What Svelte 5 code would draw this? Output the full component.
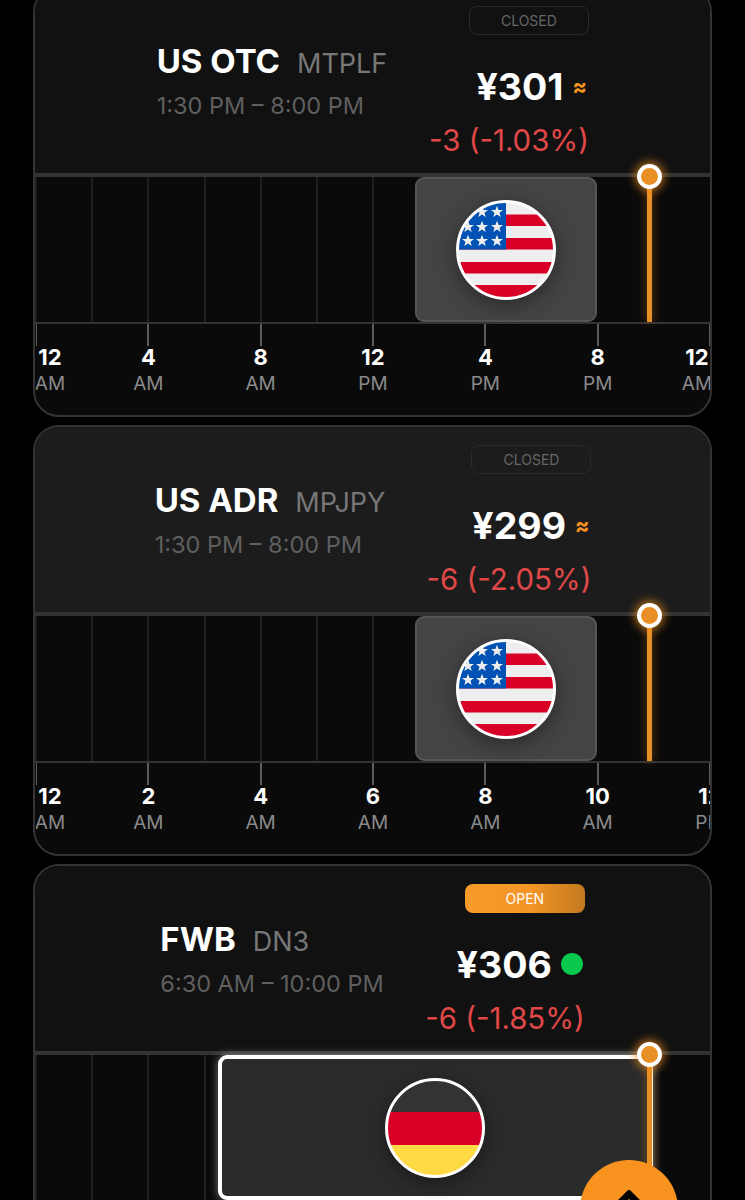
<script>
	const dayTicks = [
		['12', 'AM'],
		['4', 'AM'],
		['8', 'AM'],
		['12', 'PM'],
		['4', 'PM'],
		['8', 'PM'],
		['12', 'AM']
	];
	const halfTicks = [
		['12', 'AM'],
		['2', 'AM'],
		['4', 'AM'],
		['6', 'AM'],
		['8', 'AM'],
		['10', 'AM'],
		['12', 'PM']
	];

	const cards = [
		{
			name: 'US OTC',
			code: 'MTPLF',
			hours: '1:30 PM – 8:00 PM',
			price: '¥301',
			change: '-3 (-1.03%)',
			open: false,
			flag: 'us',
			start: 56.25,
			end: 83.33,
			now: 91,
			ticks: dayTicks,
			lastInside: true
		},
		{
			name: 'US ADR',
			code: 'MPJPY',
			hours: '1:30 PM – 8:00 PM',
			price: '¥299',
			change: '-6 (-2.05%)',
			open: false,
			flag: 'us',
			start: 56.25,
			end: 83.33,
			now: 91,
			ticks: halfTicks,
			lastInside: false,
			light: true
		},
		{
			name: 'FWB',
			code: 'DN3',
			hours: '6:30 AM – 10:00 PM',
			price: '¥306',
			change: '-6 (-1.85%)',
			open: true,
			flag: 'de',
			start: 27.08,
			end: 91.5,
			now: 91,
			ticks: dayTicks,
			lastInside: true
		}
	];

	const gridLines = [0, 1, 2, 3, 4, 5, 6];
	const star = '0,-6.2 1.6,-2 6,-1.9 2.5,0.8 3.7,5 0,2.6 -3.7,5 -2.5,0.8 -6,-1.9 -1.6,-2';
	const stars = [
		[26, 12], [41, 12],
		[12, 27], [26, 27], [41, 27],
		[12, 41], [26, 41], [41, 41]
	];
</script>

<div class="page">
	{#each cards as card}
		<section class="card" class:light={card.light}>
			<header class="head">
				<div class="title">
					<div class="title-row">
						<span class="name">{card.name}</span>
						<span class="code">{card.code}</span>
					</div>
					<div class="hours">{card.hours}</div>
				</div>
				<div class="quote" class:shifted={card.open}>
					<div class="pill" class:open={card.open}>{card.open ? 'OPEN' : 'CLOSED'}</div>
					<div class="price-row">
						<span class="price">{card.price}</span>
						{#if card.open}
							<span class="dot"></span>
						{:else}
							<span class="approx">≈</span>
						{/if}
					</div>
					<div class="change">{card.change}</div>
				</div>
			</header>

			<div class="chart">
				{#each gridLines as line}
					<span class="grid-line"></span>
				{/each}
				<div
					class="session"
					class:active={card.open}
					style="left: {card.start}%; width: {card.end - card.start}%"
				>
					<svg class="flag" viewBox="0 0 100 100">
						<defs>
							<clipPath id="round-{card.name.replace(' ', '')}">
								<circle cx="50" cy="50" r="48" />
							</clipPath>
						</defs>
						<g clip-path="url(#round-{card.name.replace(' ', '')})">
							{#if card.flag === 'us'}
								<rect width="100" height="100" fill="#eeeeee" />
								<rect y="14.5" width="100" height="11.5" fill="#d80027" />
								<rect y="38" width="100" height="11.5" fill="#d80027" />
								<rect y="62" width="100" height="11.5" fill="#d80027" />
								<rect y="85" width="100" height="15" fill="#d80027" />
								<rect width="50" height="49.5" fill="#0052b4" />
								{#each stars as [x, y]}
									<polygon points={star} fill="#eeeeee" transform="translate({x} {y})" />
								{/each}
							{:else}
								<rect width="100" height="34" fill="#333333" />
								<rect y="34" width="100" height="33" fill="#d80027" />
								<rect y="67" width="100" height="33" fill="#ffda44" />
							{/if}
						</g>
						<circle cx="50" cy="50" r="48.5" fill="none" stroke="#fff" stroke-width="3" />
					</svg>
				</div>
				<div class="now" style="left: {card.now}%">
					<span class="now-dot"></span>
				</div>
			</div>

			<div class="axis">
				{#each card.ticks as tick, i}
					<div class="tick" style="left: {(i * 100) / 6}%">
						<span class="tick-line"></span>
						<span
							class="tick-label"
							class:first={i === 0}
							class:last={i === 6 && card.lastInside}
						>
							<b>{tick[0]}</b>
							<small>{tick[1]}</small>
						</span>
					</div>
				{/each}
			</div>
		</section>
	{/each}

	<button class="fab" aria-label="Scroll to top">
		<svg viewBox="0 0 26 16" width="26" height="16">
			<path d="M2 15 13 4l11 11" fill="none" stroke="#000" stroke-width="7" />
		</svg>
	</button>
</div>

<style>
	:global(body) {
		background: #000;
		overflow: hidden;
	}

	.page {
		height: 1200px;
		overflow: hidden;
		display: flex;
		flex-direction: column;
		gap: 8px;
		padding: 0 33px;
		box-sizing: border-box;
		font-family: Inter, 'Liberation Sans', sans-serif;
		position: relative;
	}

	.card {
		flex: none;
		height: 431px;
		border: 2px solid #333;
		border-radius: 26px;
		background: #0a0a0a;
		overflow: hidden;
		display: flex;
		flex-direction: column;
		box-sizing: border-box;
	}

	.card:first-child {
		margin-top: -14px;
	}

	.head {
		flex: none;
		height: 185px;
		border-bottom: 4px solid #333;
		background: #111;
		display: grid;
		grid-template-columns: 258px 216px;
		padding-left: 108px;
		box-sizing: content-box;
	}

	.light .head {
		background: #1c1c1c;
	}

	.title {
		display: flex;
		flex-direction: column;
		width: max-content;
		justify-self: center;
		padding-top: 53px;
	}

	.light .title {
		transform: translateX(-2px);
	}

	.title-row {
		display: flex;
		align-items: baseline;
		gap: 17px;
		white-space: nowrap;
	}

	.name {
		color: #fff;
		font-size: 33px;
		font-weight: 700;
		line-height: 40px;
	}

	.code {
		color: #777;
		font-size: 27px;
		line-height: 40px;
	}

	.hours {
		color: #5f5f5f;
		font-size: 23.5px;
		line-height: 30px;
		margin-top: 7px;
		white-space: nowrap;
	}

	.quote {
		display: flex;
		flex-direction: column;
		align-items: flex-end;
		width: max-content;
		justify-self: center;
		padding-top: 18px;
	}

	.quote.shifted {
		transform: translateX(-4px);
	}

	.pill {
		width: 120px;
		height: 29px;
		box-sizing: border-box;
		border: 1px solid #2a2a2a;
		border-radius: 8px;
		background: transparent;
		color: #666;
		font-size: 14px;
		display: flex;
		align-items: center;
		justify-content: center;
	}

	.pill.open {
		border: 0;
		background: linear-gradient(90deg, #f89b2d, #f39426 55%, #c27a1f);
		color: #fff;
	}

	.price-row {
		display: flex;
		align-items: center;
		gap: 9px;
		margin-top: 29px;
		margin-right: 2px;
		height: 44px;
	}

	.price {
		color: #fff;
		font-size: 37.5px;
		font-weight: 700;
	}

	.approx {
		color: #f7931e;
		font-size: 21px;
		font-weight: 800;
		line-height: 1;
	}

	.dot {
		width: 22px;
		height: 22px;
		border-radius: 50%;
		background: #0ac84e;
	}

	.change {
		color: #e04848;
		font-size: 29.4px;
		line-height: 34px;
		margin-top: 16px;
		white-space: nowrap;
	}

	.chart {
		flex: none;
		height: 145px;
		position: relative;
		display: flex;
		border-bottom: 2px solid #333;
	}

	.grid-line {
		flex: none;
		width: 8.333%;
		box-sizing: border-box;
		border-left: 2px solid #1f1f1f;
	}

	.session {
		position: absolute;
		top: 0;
		bottom: 0;
		box-sizing: border-box;
		background: #444;
		border: 2px solid #555;
		border-radius: 9px;
		display: flex;
		align-items: center;
		justify-content: center;
	}

	.session.active {
		background: #2b2b2b;
		border: 4px solid #fff;
		box-shadow: 0 0 10px rgba(255, 255, 255, 0.45);
	}

	.flag {
		width: 100px;
		height: 100px;
		filter: drop-shadow(0 5px 10px rgba(0, 0, 0, 0.4));
	}

	.now {
		position: absolute;
		top: 0;
		bottom: 0;
		width: 5px;
		margin-left: -2px;
		background: #e88f25;
		box-shadow: 0 0 10px rgba(247, 147, 30, 0.45);
	}

	.now-dot {
		position: absolute;
		left: -10px;
		top: -13px;
		width: 25px;
		height: 25px;
		box-sizing: border-box;
		border: 4px solid #fff;
		border-radius: 50%;
		background: #e88f25;
		box-shadow: 0 0 10px 2px rgba(247, 147, 30, 0.7);
	}

	.axis {
		flex: 1;
		position: relative;
		overflow: hidden;
		margin-left: 1px;
	}

	.tick {
		position: absolute;
		top: 0;
		width: 0;
		display: flex;
		flex-direction: column;
		align-items: center;
	}

	.tick-line {
		flex: none;
		width: 2px;
		height: 22px;
		background: #5c5c5c;
	}

	.tick-label {
		flex: none;
		width: 40px;
		display: flex;
		flex-direction: column;
		align-items: center;
		margin-top: -2px;
	}

	.tick-label.first {
		transform: translateX(14px);
	}

	.tick-label.last {
		transform: translateX(-13px);
	}

	.tick-label b {
		color: #fff;
		font-size: 22px;
		font-weight: 700;
		line-height: 26px;
	}

	.tick-label small {
		color: #8a8a8a;
		font-size: 19px;
		line-height: 25px;
		margin-top: 1px;
	}

	.fab {
		position: absolute;
		left: 580px;
		top: 1160px;
		width: 98px;
		height: 98px;
		padding: 30px 0 0;
		border: 0;
		border-radius: 50%;
		background: #f7931e;
		display: flex;
		justify-content: center;
		align-items: flex-start;
	}
</style>
